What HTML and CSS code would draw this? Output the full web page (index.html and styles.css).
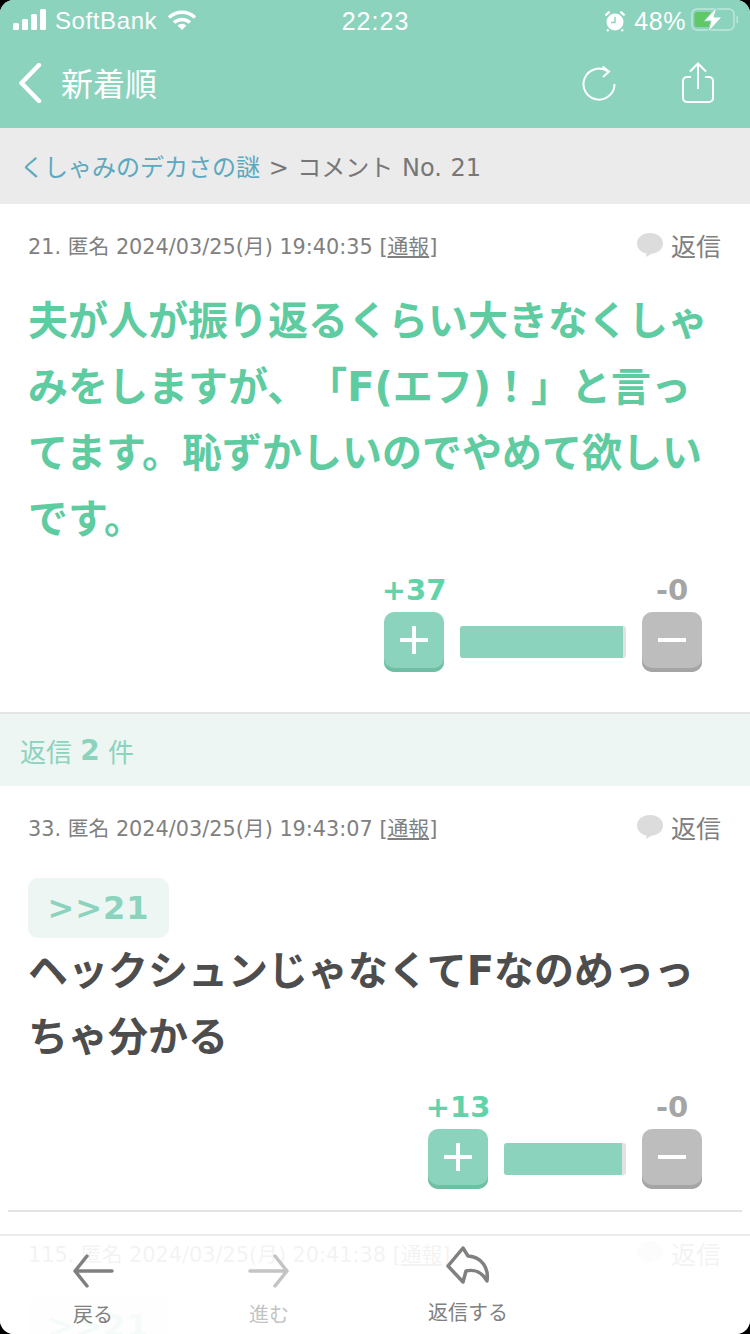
FILE: index.html
```html
<!DOCTYPE html>
<html lang="ja">
<head>
  <meta charset="UTF-8">
  <title>コメント No. 21</title>
  <link rel="stylesheet" href="styles.css">
</head>
<body>
  <div class="screen">
    <div class="statusbar">
      <div class="status-left">
        <svg class="signal" width="34" height="22" viewBox="0 0 34 22"><rect x="0" y="14" width="6" height="7" rx="1.5"/><rect x="9" y="10" width="6" height="11" rx="1.5"/><rect x="18" y="5" width="6" height="16" rx="1.5"/><rect x="27" y="0" width="6" height="21" rx="1.5"/></svg>
        <span>SoftBank</span>
        <svg class="wifi" width="30" height="22" viewBox="0 0 30 22"><path d="M2 8.500a19 19 0 0 1 26 0" /><path d="M7 13.500a12 12 0 0 1 16 0"/><path class="wifi-dot" d="M15 21l-4.500-4.500a6.500 6.500 0 0 1 9 0z"/></svg>
      </div>
      <div class="status-time">22:23</div>
      <div class="status-right">
        <svg class="alarm" width="22" height="22" viewBox="0 0 22 22"><circle cx="11" cy="12" r="8.500" fill="#fff"/><path d="M1.500 5.500 5.500 1.700M20.500 5.500 16.500 1.700M4.500 19.500 3 21M17.500 19.500 19 21" stroke="#fff" stroke-width="2.400" fill="none"/><path d="M11 7v5.500H7" stroke="#8bd3bd" stroke-width="1.500" fill="none"/></svg>
        <span>48%</span>
        <svg class="battery" width="48" height="26" viewBox="0 0 48 26"><rect x="2" y="2" width="42" height="21" rx="5" fill="none" stroke="#fff" stroke-opacity=".45" stroke-width="1.500"/><rect x="4.500" y="5" width="17" height="15" rx="2.500" fill="#62c766"/><path d="M46.500 8.500v8a3 3 0 0 0 1.500-4 3 3 0 0 0-1.500-4z" fill="#fff" fill-opacity=".45"/><path d="M27 0 14 14h7l-3 11 14-15h-8z" fill="#fff" stroke="#8bd3bd" stroke-width="1"/></svg>
      </div>
    </div>

    <header class="navbar">
      <div class="nav-left">
        <svg width="24" height="40" viewBox="0 0 24 40"><path d="M21 2 3.500 20 21 38" fill="none" stroke="#fff" stroke-width="4.500" stroke-linecap="round" stroke-linejoin="round"/></svg>
        <span class="nav-title">新着順</span>
      </div>
      <div class="nav-right">
        <svg width="34" height="36" viewBox="0 0 34 36"><path d="M26 6.500A15.500 15.500 0 1 0 32.500 19" fill="none" stroke="#fff" stroke-width="2"/><path d="M20.500 1.500 27 6.500 21 12" fill="none" stroke="#fff" stroke-width="2"/></svg>
        <svg width="34" height="42" viewBox="0 0 34 42"><path d="M10 15H6a4 4 0 0 0-4 4v17a4 4 0 0 0 4 4h22a4 4 0 0 0 4-4V19a4 4 0 0 0-4-4h-4" fill="none" stroke="#fff" stroke-width="2"/><path d="M17 27V2M9 9.500 17 1.500l8 8" fill="none" stroke="#fff" stroke-width="2"/></svg>
      </div>
    </header>

    <div class="crumbs"><a href="#">くしゃみのデカさの謎</a> &gt; コメント No. 21</div>

    <section class="comment main-comment">
      <div class="meta">
        <div class="meta-info">21. 匿名 2024/03/25(月) 19:40:35 [<u>通報</u>]</div>
        <div class="reply-link">
          <svg width="28" height="26" viewBox="0 0 28 26"><path d="M14 1C6.500 1 1 5.500 1 11.500c0 5 4 9 9.500 10L10 25l6-3.500c6.500-.5 11-4.500 11-10C27 5.500 21.500 1 14 1z"/></svg>
          <span>返信</span>
        </div>
      </div>
      <p class="body-text big-green">夫が人が振り返るくらい大きなくしゃみをしますが、「F(エフ)！」と言ってます。恥ずかしいのでやめて欲しいです。</p>
      <div class="votes">
        <div class="vote-col">
          <span class="count plus-count">+37</span>
          <button class="vote-btn plus"><span class="bar-h"></span><span class="bar-v"></span></button>
        </div>
        <div class="meter" style="width: 166px"><div class="meter-fill" style="width: 98%"></div></div>
        <div class="vote-col">
          <span class="count minus-count">-0</span>
          <button class="vote-btn minus"><span class="bar-h"></span></button>
        </div>
      </div>
    </section>

    <div class="replies-head">返信 <b>2</b> 件</div>

    <section class="comment reply-comment">
      <div class="meta">
        <div class="meta-info">33. 匿名 2024/03/25(月) 19:43:07 [<u>通報</u>]</div>
        <div class="reply-link">
          <svg width="28" height="26" viewBox="0 0 28 26"><path d="M14 1C6.500 1 1 5.500 1 11.500c0 5 4 9 9.500 10L10 25l6-3.500c6.500-.5 11-4.500 11-10C27 5.500 21.500 1 14 1z"/></svg>
          <span>返信</span>
        </div>
      </div>
      <div class="anchor">&gt;&gt;21</div>
      <p class="body-text">ヘックシュンじゃなくてFなのめっっちゃ分かる</p>
      <div class="votes">
        <div class="vote-col">
          <span class="count plus-count">+13</span>
          <button class="vote-btn plus"><span class="bar-h"></span><span class="bar-v"></span></button>
        </div>
        <div class="meter" style="width: 122px"><div class="meter-fill" style="width: 97%"></div></div>
        <div class="vote-col">
          <span class="count minus-count">-0</span>
          <button class="vote-btn minus"><span class="bar-h"></span></button>
        </div>
      </div>
    </section>

    <hr class="divider">

    <section class="comment reply-comment under-toolbar">
      <div class="meta">
        <div class="meta-info">115. 匿名 2024/03/25(月) 20:41:38 [<u>通報</u>]</div>
        <div class="reply-link">
          <svg width="28" height="26" viewBox="0 0 28 26"><path d="M14 1C6.500 1 1 5.500 1 11.500c0 5 4 9 9.500 10L10 25l6-3.500c6.500-.5 11-4.500 11-10C27 5.500 21.500 1 14 1z"/></svg>
          <span>返信</span>
        </div>
      </div>
      <div class="anchor">&gt;&gt;21</div>
    </section>

    <nav class="toolbar">
      <a class="tool" href="#">
        <svg width="42" height="36" viewBox="0 0 42 36"><path d="M40 18H3M15 3 3 18l12 15" fill="none" stroke="#808080" stroke-width="3.500" stroke-linecap="round" stroke-linejoin="round"/></svg>
        <span>戻る</span>
      </a>
      <a class="tool disabled" href="#">
        <svg width="42" height="36" viewBox="0 0 42 36"><path d="M2 18h37M27 3l12 15-12 15" fill="none" stroke="#c4c4c4" stroke-width="3.500" stroke-linecap="round" stroke-linejoin="round"/></svg>
        <span>進む</span>
      </a>
      <a class="tool tool-reply" href="#">
        <svg width="44" height="38" viewBox="0 0 44 38"><path d="M17 2 2 20l15 16 3-11c8-2 16 1 21 10 2-13-5-24-19-25z" fill="none" stroke="#808080" stroke-width="3.500" stroke-linecap="round" stroke-linejoin="round"/></svg>
        <span>返信する</span>
      </a>
    </nav>
  </div>
</body>
</html>
```

FILE: styles.css
```css
* { box-sizing: border-box; }
body {
  margin: 0;
  background: #000;
  font-family: "DejaVu Sans", "Noto Sans CJK JP", sans-serif;
  color: #808080;
  text-spacing-trim: space-all;
}
.screen {
  position: relative;
  height: 1334px;
  overflow: hidden;
  background: #fff;
  border-radius: 14px;
}

/* status bar */
.statusbar {
  display: grid;
  grid-template-columns: 1fr auto 1fr;
  align-items: center;
  height: 40px;
  padding: 2px 12px 0 13px;
  background: #8bd3bd;
  color: #fff;
  font-family: "Liberation Sans", sans-serif;
  font-size: 24px;
  letter-spacing: 0.6px;
}
.status-left { display: flex; align-items: center; gap: 8px; }
.signal { fill: #fff; margin-top: -2px; }
.wifi { margin-left: 2px; margin-top: -2px; }
.wifi path { fill: none; stroke: #fff; stroke-width: 3.500; }
.wifi .wifi-dot { fill: #fff; stroke: none; }
.status-time { font-size: 25px; letter-spacing: 1px; }
.status-right { display: flex; align-items: center; justify-content: flex-end; gap: 8px; }
.status-right span { font-size: 25px; }
.status-right .battery { margin-left: -4px; margin-top: -2px; }

/* nav */
.navbar {
  display: flex;
  align-items: center;
  justify-content: space-between;
  height: 88px;
  padding: 0 35px 2px 18px;
  background: #8bd3bd;
  color: #fff;
}
.nav-left { display: flex; align-items: center; gap: 19px; }
.nav-title { font-size: 32px; margin-top: -2px; }
.nav-right { display: flex; align-items: center; gap: 65px; }

.crumbs {
  display: flex;
  align-items: center;
  height: 76px;
  padding: 0 20px 2px;
  background: #ebebeb;
  color: #777;
  font-size: 24px;
  word-spacing: 1px;
  white-space: pre;
}
.crumbs a { color: #5aa9c0; text-decoration: none; }

/* comments */
.comment { padding: 20px 48px 0 28px; }
.main-comment { height: 510px; border-bottom: 2px solid #e4e4e4; }
.reply-comment { height: 424px; }
.meta {
  display: flex;
  align-items: center;
  justify-content: space-between;
  height: 42px;
  margin-right: -19px;
  font-size: 20.8px;
}
.meta-info { color: #808080; white-space: nowrap; }
.meta-info u { text-underline-offset: 2px; }
.reply-link { display: flex; align-items: center; gap: 7px; font-size: 25px; }
.reply-link svg { fill: #dcdcdc; }
.main-comment .body-text { margin-top: 22px; }
.main-comment .votes { margin-top: 21px; }
.body-text {
  margin: 0 -20px 0 0;
  color: #4d4d4d;
  font-size: 40px;
  font-weight: 700;
  line-height: 66px;
}
.big-green { color: #5ecba1; }

.anchor {
  display: flex;
  align-items: center;
  justify-content: center;
  width: 141px;
  height: 60px;
  margin-top: 30px;
  background: #edf6f3;
  border-radius: 10px;
  color: #8bd3bd;
  font-size: 32px;
  font-weight: 700;
  letter-spacing: 1px;
}
.under-toolbar .anchor { margin-top: 22px; }

/* votes */
.votes { display: flex; justify-content: flex-end; align-items: flex-end; gap: 16px; margin-top: 20px; }
.vote-col { display: flex; flex-direction: column; align-items: center; width: 60px; }
.count { height: 39px; font-size: 29px; font-weight: 700; line-height: 34px; white-space: nowrap; }
.plus-count { color: #60d3a9; }
.minus-count { color: #a5a5a5; }
.vote-btn {
  position: relative;
  width: 60px;
  height: 60px;
  padding: 0;
  border: none;
  border-radius: 10px;
}
.plus { background: #8bd3bd; box-shadow: inset 0 -4px 0 #6fbfa4; }
.minus { background: #bdbdbd; box-shadow: inset 0 -4px 0 #a5a5a5; }
.bar-h, .bar-v { position: absolute; background: #fff; }
.bar-h { left: 16px; top: 26px; width: 28px; height: 4px; }
.bar-v { left: 28px; top: 14px; width: 4px; height: 28px; }
.meter {
  height: 32px;
  margin-bottom: 14px;
  background: #e2e2e2;
  border-radius: 3px;
  overflow: hidden;
}
.meter-fill { height: 100%; background: #8bd3bd; }

.replies-head {
  display: flex;
  align-items: center;
  height: 72px;
  padding-left: 20px;
  background: #edf6f3;
  color: #8bd3bd;
  font-size: 26px;
  white-space: pre;
}
.replies-head b { font-size: 28px; }

.divider {
  height: 2px;
  margin: 0 8px;
  border: none;
  background: #e4e4e4;
}

/* bottom toolbar */
.toolbar {
  position: absolute;
  left: 0;
  right: 0;
  bottom: 0;
  display: grid;
  grid-template-columns: 176px 176px 222px;
  height: 100px;
  padding-left: 5px;
  background: rgba(255, 255, 255, 0.9);
  border-top: 2px solid #ececec;
}
.tool {
  display: flex;
  flex-direction: column;
  align-items: center;
  padding-top: 17px;
  gap: 10px;
  color: #808080;
  font-size: 20px;
  text-decoration: none;
}
.tool.disabled { color: #c4c4c4; }
.tool-reply { padding-top: 10px; gap: 13px; }
```
